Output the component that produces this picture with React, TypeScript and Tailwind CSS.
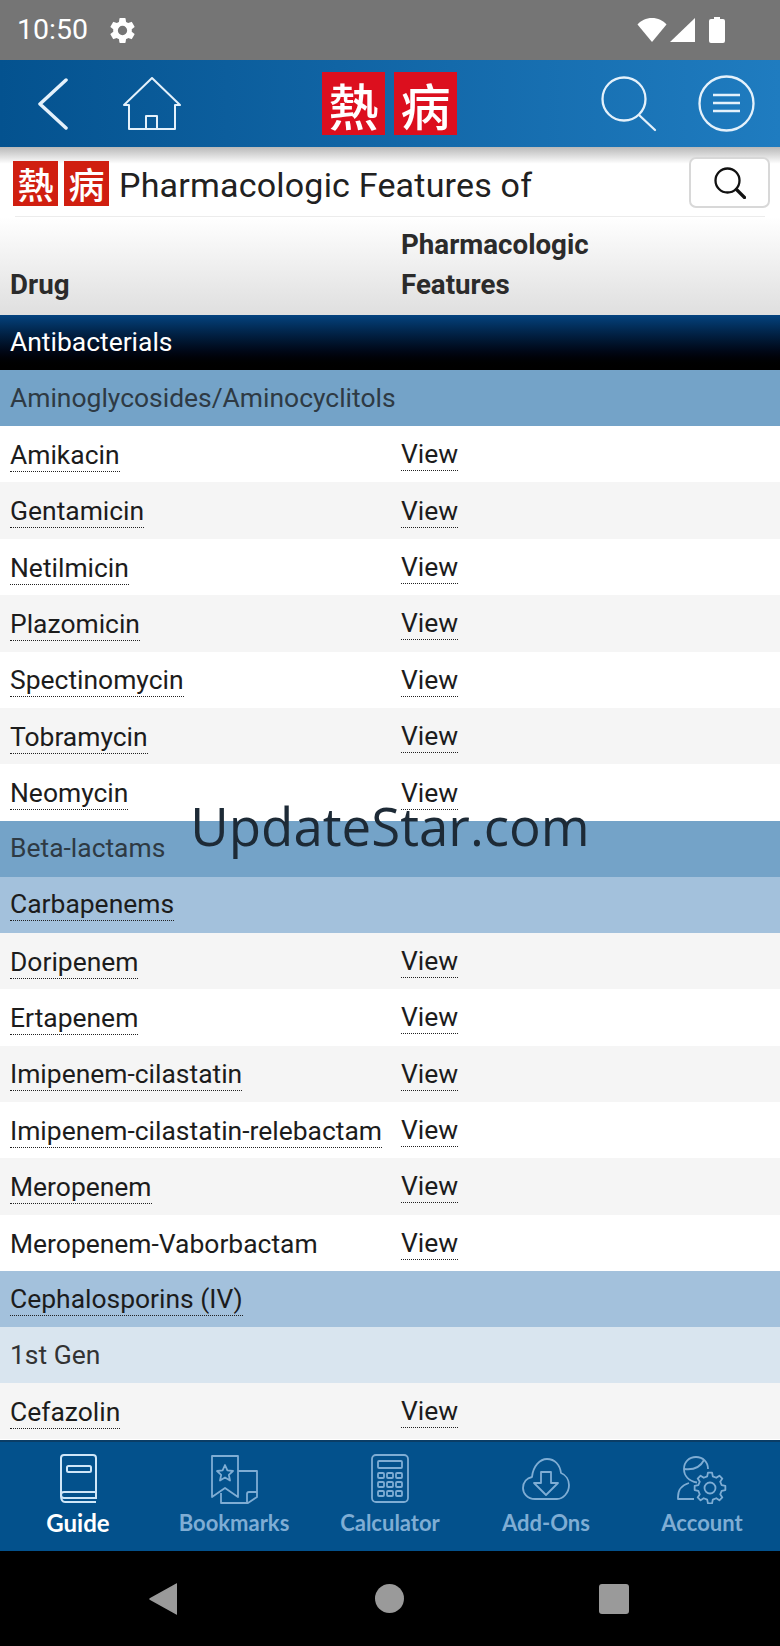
import React from "react";

const drugRow = (name: string, view = true, underline = true) => ({ type: "drug", name, view, underline });

const rows: any[] = [
  drugRow("Amikacin"),
  drugRow("Gentamicin"),
  drugRow("Netilmicin"),
  drugRow("Plazomicin"),
  drugRow("Spectinomycin"),
  drugRow("Tobramycin"),
  drugRow("Neomycin"),
  { type: "group", name: "Beta-lactams" },
  { type: "sub", name: "Carbapenems" },
  drugRow("Doripenem"),
  drugRow("Ertapenem"),
  drugRow("Imipenem-cilastatin"),
  drugRow("Imipenem-cilastatin-relebactam"),
  drugRow("Meropenem"),
  drugRow("Meropenem-Vaborbactam", true, false),
  { type: "sub", name: "Cephalosporins (IV)" },
  { type: "gen", name: "1st Gen" },
  drugRow("Cefazolin"),
];

const greyRows = ["Gentamicin", "Plazomicin", "Tobramycin", "Doripenem", "Imipenem-cilastatin", "Meropenem", "Cefazolin"];

// builds the outline of a toothed gear for the account tab icon
const gearPath = (cx: number, cy: number, outer: number, inner: number, teeth: number) => {
  const pts: string[] = [];
  const step = (Math.PI * 2) / teeth;
  for (let i = 0; i < teeth; i++) {
    const a = i * step - Math.PI / 2;
    const corners: [number, number][] = [
      [inner, a - step * 0.3],
      [outer, a - step * 0.17],
      [outer, a + step * 0.17],
      [inner, a + step * 0.3],
    ];
    corners.forEach(([r, t]) => pts.push(`${(cx + r * Math.cos(t)).toFixed(2)} ${(cy + r * Math.sin(t)).toFixed(2)}`));
  }
  return `M${pts.join("L")}Z`;
};

const LogoTile = ({ ch, big }: { ch: string; big?: boolean }) => (
  <div
    className={
      big
        ? "w-[63px] h-[63px] bg-[#dc0f1e] flex items-center justify-center text-white text-[50px] leading-none font-['Noto_Sans_CJK_TC',sans-serif] font-medium"
        : "w-[45px] h-[45px] bg-[#d01f10] flex items-center justify-center text-white text-[36px] leading-none font-['Noto_Sans_CJK_TC',sans-serif] font-medium"
    }
  >
    {ch}
  </div>
);

const navItems = [
  {
    label: "Guide",
    active: true,
    icon: (
      <svg width="40" height="50" viewBox="0 0 40 50" fill="none" stroke="currentColor" strokeWidth="2">
        <path d="M3 41V4q0-3 3-3h29q3 0 3 3v40H6q-3 0-3-3q0-3 3-3h32" />
        <path d="M3 41q0 7 4 7h31" />
        <rect x="9" y="12" width="24" height="6" rx="1.5" />
      </svg>
    ),
  },
  {
    label: "Bookmarks",
    icon: (
      <svg width="50" height="50" viewBox="0 0 50 50" fill="none" stroke="currentColor" strokeWidth="1.8" strokeLinejoin="round">
        <path d="M3 2h26v41l-13-9-13 9z" />
        <path d="M29 17h19v26l-9 6H12v-10" />
        <path d="M48 38h-8q-2 0-2 2v9" />
        <path d="M16 11l2.4 5.4 5.6.6-4.2 3.8 1.2 5.7-5-3-5 3 1.2-5.7L8 17l5.6-.6z" />
      </svg>
    ),
  },
  {
    label: "Calculator",
    icon: (
      <svg width="40" height="50" viewBox="0 0 40 50" fill="none" stroke="currentColor" strokeWidth="1.8">
        <rect x="2" y="1" width="36" height="47" rx="4" />
        <rect x="8" y="7" width="24" height="7" rx="1" />
        <rect x="8" y="19" width="6" height="5" rx="1" />
        <rect x="17" y="19" width="6" height="5" rx="1" />
        <rect x="26" y="19" width="6" height="5" rx="1" />
        <rect x="8" y="28" width="6" height="5" rx="1" />
        <rect x="17" y="28" width="6" height="5" rx="1" />
        <rect x="26" y="28" width="6" height="5" rx="1" />
        <rect x="8" y="37" width="6" height="5" rx="1" />
        <rect x="17" y="37" width="6" height="5" rx="1" />
        <rect x="26" y="37" width="6" height="5" rx="1" />
      </svg>
    ),
  },
  {
    label: "Add-Ons",
    icon: (
      <svg width="48" height="44" viewBox="0 0 48 44" fill="none" stroke="currentColor" strokeWidth="1.8" strokeLinejoin="round">
        <path d="M13 42C5 42 1 36 1 31c0-6 4-10 9-11C11 9 18 2 25 2c8 0 13 6 14 14 5 2 8 7 8 12 0 8-6 14-12 14z" />
        <path d="M19 15h10v11h7L24 38 12 26h7z" />
      </svg>
    ),
  },
  {
    label: "Account",
    icon: (
      <svg width="50" height="50" viewBox="0 0 50 50" fill="none" stroke="currentColor" strokeWidth="1.8" strokeLinejoin="round">
        <path d="M20 28.500C12 27 7 22 7 15C7 8 12 3 19 3C26 3 31 8 31 15" />
        <path d="M7 15c8 1 16-1 20-9" />
        <path d="M12 29C5 31 1 36 1 43v2h16" />
        <path d={gearPath(33, 34, 15.5, 12, 8)} />
        <circle cx="33" cy="34" r="5.500" />
      </svg>
    ),
  },
];

export default function App() {
  return (
    <div className="relative w-[780px] h-[1646px] flex flex-col overflow-hidden bg-white font-['Roboto',sans-serif]">
      {/* status bar */}
      <div className="h-[60px] shrink-0 bg-[#757575] flex items-center text-white">
        <span className="ml-[17px] text-[28.500px] font-normal">10:50</span>
        <svg className="ml-[19px]" width="31" height="31" viewBox="0 0 24 24" fill="currentColor">
          <path d="M19.14 12.94c.04-.3.06-.61.06-.94s-.02-.64-.07-.94l2.03-1.58a.49.49 0 0 0 .12-.61l-1.92-3.32a.49.49 0 0 0-.59-.22l-2.39.96a7.03 7.03 0 0 0-1.62-.94l-.36-2.54a.48.48 0 0 0-.48-.41h-3.84a.48.48 0 0 0-.47.41l-.36 2.54c-.59.24-1.13.57-1.62.94l-2.39-.96a.49.49 0 0 0-.59.22L2.74 8.87a.48.48 0 0 0 .12.61l2.03 1.58c-.05.3-.09.63-.09.94s.02.64.07.94l-2.03 1.58a.49.49 0 0 0-.12.61l1.92 3.32c.12.22.37.29.59.22l2.39-.96c.5.38 1.03.7 1.62.94l.36 2.54c.05.24.24.41.48.41h3.84c.24 0 .44-.17.47-.41l.36-2.54c.59-.24 1.13-.56 1.62-.94l2.39.96c.22.08.47 0 .59-.22l1.92-3.32a.48.48 0 0 0-.12-.61zM12 15.600A3.600 3.600 0 1 1 12 8.400a3.600 3.600 0 0 1 0 7.200z" />
        </svg>
        <div className="ml-auto mr-[55px] flex items-center gap-[3px]">
          <svg width="30" height="26" viewBox="0 0 30 26" fill="currentColor">
            <path d="M0.500 7.500C4 3.500 9 1 15 1s11 2.500 14.500 6.500L15 25z" />
          </svg>
          <svg width="25" height="26" viewBox="0 0 25 26" fill="currentColor">
            <path d="M25 1v24H0z" />
          </svg>
          <svg className="ml-[11px]" width="16" height="26" viewBox="0 0 16 26" fill="currentColor">
            <path d="M5 0h6v2h3q2 0 2 2v20q0 2-2 2H2q-2 0-2-2V4q0-2 2-2h3z" />
          </svg>
        </div>
      </div>

      {/* app bar */}
      <div className="h-[87px] shrink-0 flex items-center bg-gradient-to-r from-[#04528f] to-[#1f7cc0] text-[#e4f1fb]">
        <svg className="ml-[38px]" width="30" height="52" viewBox="0 0 30 52" fill="none" stroke="currentColor" strokeWidth="3.500" strokeLinecap="round" strokeLinejoin="round">
          <path d="M28 2L2 26l26 24" />
        </svg>
        <svg className="ml-[55px]" width="58" height="54" viewBox="0 0 58 54" fill="none" stroke="currentColor" strokeWidth="2" strokeLinejoin="round">
          <path d="M1 28L29 1l28 27h-5v24H6V28z" />
          <path d="M23 52V39h11v13" />
        </svg>
        <div className="ml-[141px] flex gap-[9px]">
          <LogoTile ch="熱" big />
          <LogoTile ch="病" big />
        </div>
        <svg className="ml-[144px]" width="56" height="56" viewBox="0 0 56 56" fill="none" stroke="currentColor" strokeWidth="2.300" strokeLinecap="round">
          <circle cx="23" cy="23" r="21.500" />
          <path d="M38 39l16 15" />
        </svg>
        <svg className="ml-[41px]" width="57" height="57" viewBox="0 0 57 57" fill="none" stroke="currentColor" strokeWidth="2.300">
          <circle cx="28.500" cy="28.500" r="27" />
          <path d="M15 20h27M15 28h27M15 36h27" />
        </svg>
      </div>

      {/* title row */}
      <div className="h-[70px] shrink-0 flex flex-col bg-gradient-to-b from-[#b9b9b9] via-white via-[24%] to-white">
        <div className="flex-1 flex items-center pl-[13px] pr-[10px] pt-[3px]">
          <div className="flex gap-[6px]">
            <LogoTile ch="熱" />
            <LogoTile ch="病" />
          </div>
          <span className="ml-[10px] mt-[3px] text-[34px] tracking-[0.2px] text-[#212121] leading-none">Pharmacologic Features of</span>
          <div className="ml-auto w-[81px] h-[51px] mt-[-1px] border-2 border-[#d8d8d8] rounded-[7px] bg-white flex items-center justify-center">
            <svg width="32" height="32" viewBox="0 0 32 32" fill="none" stroke="#111" strokeWidth="2.300" strokeLinecap="round">
              <circle cx="13.500" cy="13.500" r="12" />
              <path d="M22.500 22.500l8 8" strokeWidth="3.200" />
            </svg>
          </div>
        </div>
        <div className="h-[1px] mx-[15px] bg-[#ececec]" />
      </div>

      {/* table header */}
      <div className="h-[98px] shrink-0 flex items-end bg-gradient-to-b from-white to-[#dfdfdf] pb-[10px] text-[27.700px] leading-[40px] font-bold text-[#2b2b2b]">
        <div className="w-[401px] pl-[10px]">Drug</div>
        <div className="w-[220px]">Pharmacologic Features</div>
      </div>

      {/* table */}
      <div className="flex-1 min-h-0 overflow-hidden text-[26.450px] text-[#1c1c1c]">
        <div className="h-[55px] flex items-center pl-[10px] pb-[2px] bg-gradient-to-b from-[#04437f] to-[#000000] text-white">Antibacterials</div>
        <div className="h-[56px] flex items-center pl-[10px] bg-[#74a3c8] text-[#2e3a44]">Aminoglycosides/Aminocyclitols</div>
        {rows.map((row) => {
          if (row.type === "group")
            return (
              <div key={row.name} className="h-[56px] flex items-center pl-[10px] pb-[2px] bg-[#74a3c8] text-[#2e3a44]">
                {row.name}
              </div>
            );
          if (row.type === "sub")
            return (
              <div key={row.name} className="h-[56px] flex items-center pl-[10px] bg-[#a3c1dc]">
                <span className="border-b border-dotted border-[#222] leading-[32px]">{row.name}</span>
              </div>
            );
          if (row.type === "gen")
            return (
              <div key={row.name} className="h-[56px] flex items-center pl-[10px] bg-[#d9e5ef] text-[#333]">
                {row.name}
              </div>
            );
          return (
            <div key={row.name} className={`h-[56.400px] flex items-center ${greyRows.includes(row.name) ? "bg-[#f5f5f5]" : "bg-white"}`}>
              <div className="w-[401px] pl-[10px]">
                <span className={row.underline ? "border-b border-dotted border-[#222] leading-[32px] inline-block mt-[5px]" : "leading-[32px] inline-block mt-[5px]"}>{row.name}</span>
              </div>
              <span className="border-b border-dotted border-[#222] leading-[32px] inline-block mt-[1px]">View</span>
            </div>
          );
        })}
      </div>

      {/* bottom tabs */}
      <div className="h-[111px] shrink-0 grid grid-cols-5 bg-[#03518c] border-t-2 border-[#0b3d66] text-[#7fadd4] font-['Lato',sans-serif] text-[22px] font-bold">
        {navItems.map((item) => (
          <div key={item.label} className={`flex flex-col items-center pt-[11px] ${item.active ? "text-white" : ""}`}>
            <div className={`h-[52px] flex items-center ${item.active ? "text-[#cfe6f8]" : ""}`}>{item.icon}</div>
            <span className={item.active ? "mt-[3px] leading-[30px] text-[24px]" : "mt-[3px] leading-[30px]"}>{item.label}</span>
          </div>
        ))}
      </div>

      {/* android nav */}
      <div className="h-[95px] shrink-0 bg-black flex items-center justify-between pl-[149px] pr-[151px]">
        <svg width="28" height="32" viewBox="0 0 28 32" fill="#9a9a9a">
          <path d="M28 1v30L1 16z" stroke="#9a9a9a" strokeWidth="1.500" strokeLinejoin="round" />
        </svg>
        <div className="w-[29px] h-[29px] ml-[2px] rounded-full bg-[#9a9a9a]" />
        <div className="w-[30px] h-[30px] rounded-[3px] bg-[#9a9a9a]" />
      </div>

      {/* watermark */}
      <div className="absolute left-0 right-0 top-[789px] text-center text-[52.800px] leading-[74px] text-[#1d2a36] font-['Open_Sans',sans-serif]">UpdateStar.com</div>
    </div>
  );
}
